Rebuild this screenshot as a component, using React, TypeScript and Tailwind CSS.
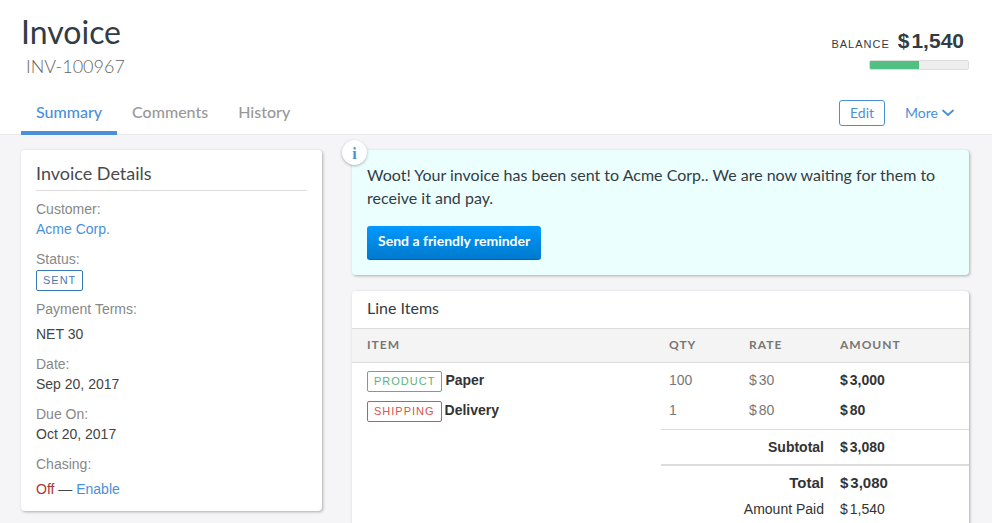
import type { ReactNode } from "react";

function Money({ value }: { value: string }) {
  return (
    <span>
      <span className="mr-0.5">$</span>
      {value}
    </span>
  );
}

type TagTone = "blue" | "green" | "red";

const tagTones: Record<TagTone, string> = {
  blue: "border-[#337ab7] text-[#4a78b5]",
  green: "border-[#5cb85c] text-[#5cb377]",
  red: "border-[#d9534f] text-[#d9534f]",
};

function Tag({ tone, children }: { tone: TagTone; children: ReactNode }) {
  return (
    <span
      className={`mt-px inline-block rounded-xs border px-1.5 text-[11px] leading-[19px] tracking-[1px] uppercase ${tagTones[tone]}`}
    >
      {children}
    </span>
  );
}

function Tab({ label, active = false }: { label: string; active?: boolean }) {
  return (
    <a
      href="#"
      aria-current={active ? "page" : undefined}
      className={`border-b-4 px-[15px] pt-[9px] pb-[7px] font-[Lato] text-base leading-6 font-medium ${
        active ? "border-[#4a90d9] text-[#4a90d9]" : "border-transparent text-[#999]"
      }`}
    >
      {label}
    </a>
  );
}

function Header() {
  return (
    <header className="border-b border-[#e8e9eb] bg-white pr-[23px] pl-[21px]">
      <div className="flex h-[91px] justify-between pt-3">
        <div className="font-[Lato]">
          <h1 className="text-[32px] leading-10 text-[#333c44]">Invoice</h1>
          <p className="pl-[5px] text-lg leading-7 font-light text-[#666]">INV-100967</p>
        </div>
        <div className="flex flex-col items-end pt-[15px]">
          <p className="flex items-baseline gap-2 pr-[5px] leading-7 text-[#333c44]">
            <span className="text-[11px] tracking-[1px]">BALANCE</span>
            <span className="text-[21px] font-bold">
              <Money value="1,540" />
            </span>
          </p>
          <div
            role="progressbar"
            aria-label="Paid"
            aria-valuenow={50}
            className="mt-0.5 h-2.5 w-[100px] overflow-hidden rounded-xs border border-[#ddd] bg-[#eee]"
          >
            <div className="h-full w-1/2 bg-[#52bf83]" />
          </div>
        </div>
      </div>
      <div className="flex items-start justify-between">
        <nav className="-mb-px flex">
          <Tab label="Summary" active />
          <Tab label="Comments" />
          <Tab label="History" />
        </nav>
        <div className="flex items-center gap-5 pt-[9px] pr-[15px] font-[Lato] text-sm text-[#4a90d9]">
          <button type="button" className="h-[26px] rounded-[3px] border border-[#4a90d9] px-2.5 leading-6">
            Edit
          </button>
          <button type="button" className="flex items-center gap-1 leading-6">
            More
            <svg viewBox="0 0 12 8" className="h-2 w-3" fill="none" stroke="currentColor" strokeWidth="1.8">
              <path d="M1 1.5 L6 6 L11 1.5" strokeLinecap="round" strokeLinejoin="round" />
            </svg>
          </button>
        </div>
      </div>
    </header>
  );
}

function Detail({ label, spaced = false, children }: { label: string; spaced?: boolean; children: ReactNode }) {
  return (
    <div>
      <dt className="text-[#888]">{label}:</dt>
      <dd className={spaced ? "pt-[5px]" : ""}>{children}</dd>
    </div>
  );
}

function InvoiceDetails() {
  return (
    <section className="w-[301px] shrink-0 rounded bg-white px-[15px] pt-[9px] pb-3 shadow-[1px_1px_3px_rgba(0,0,0,0.3)]">
      <h2 className="border-b border-[#ddd] pb-[3px] font-[Lato] text-lg leading-7 text-[#4a4a4a]">Invoice Details</h2>
      <dl className="flex flex-col gap-2.5 pt-2 text-sm leading-5 text-[#444]">
        <Detail label="Customer">
          <a href="#" className="text-[#4a90d9]">
            Acme Corp.
          </a>
        </Detail>
        <Detail label="Status">
          <div className="flex h-5 items-start">
            <Tag tone="blue">Sent</Tag>
          </div>
        </Detail>
        <Detail label="Payment Terms" spaced>
          NET 30
        </Detail>
        <Detail label="Date">Sep 20, 2017</Detail>
        <Detail label="Due On">Oct 20, 2017</Detail>
        <Detail label="Chasing" spaced>
          <span className="text-[#a93636]">Off</span> —{" "}
          <a href="#" className="text-[#4a90d9]">
            Enable
          </a>
        </Detail>
      </dl>
    </section>
  );
}

function Notice() {
  return (
    <section className="relative rounded bg-[#ebffff] px-[15px] pt-[13px] pb-[15px] shadow-[1px_1px_3px_rgba(0,0,0,0.3)]">
      <span className="absolute -top-2.5 -left-2.5 flex size-[25px] items-center justify-center rounded-full bg-white pt-0.5 font-['Liberation_Serif'] text-base font-bold text-[#4a90d9] shadow-[0_1px_3px_rgba(0,0,0,0.3)]">
        i
      </span>
      <p className="font-[Lato] text-base leading-[23px] text-[#333c44]">
        Woot! Your invoice has been sent to Acme Corp.. We are now waiting for them to receive it and pay.
      </p>
      <button
        type="button"
        className="mt-[17px] block h-[34px] rounded-[3px] border-b border-[#0069b3] bg-linear-to-b from-[#0099ff] to-[#007acc] px-[11px] pb-1 font-[Lato] text-sm font-bold text-white"
      >
        Send a friendly reminder
      </button>
    </section>
  );
}

const items: { tag: string; tone: TagTone; name: string; qty: string; rate: string; amount: string }[] = [
  { tag: "Product", tone: "green", name: "Paper", qty: "100", rate: "30", amount: "3,000" },
  { tag: "Shipping", tone: "red", name: "Delivery", qty: "1", rate: "80", amount: "80" },
];

function LineItems() {
  return (
    <section className="rounded bg-white pb-5 shadow-[1px_1px_3px_rgba(0,0,0,0.3)]">
      <h2 className="px-[15px] pt-[5px] pb-2 font-[Lato] text-base leading-6 text-[#333c44]">Line Items</h2>
      <table className="w-full table-fixed border-separate border-spacing-0 text-left text-sm leading-5 text-[#333]">
        <thead className="font-[Lato] text-xs tracking-[1px] text-[#777]">
          <tr className="[&>th]:h-[35px] [&>th]:border-y [&>th]:border-[#ddd] [&>th]:bg-[#f4f4f4] [&>th]:pb-px">
            <th className="pl-[15px]">ITEM</th>
            <th className="w-20 pl-2">QTY</th>
            <th className="w-[91px] pl-2">RATE</th>
            <th className="w-[137px] pl-2">AMOUNT</th>
          </tr>
        </thead>
        <tbody>
          {items.map((item) => (
            <tr key={item.name} className="[&>td]:h-[30px] [&>td]:pt-[7px] [&>td]:align-top">
              <td className="pl-[15px]">
                <div className="flex items-start gap-[3px]">
                  <Tag tone={item.tone}>{item.tag}</Tag>
                  <b>{item.name}</b>
                </div>
              </td>
              <td className="pl-2 text-[#777]">{item.qty}</td>
              <td className="pl-2 text-[#777]">
                <Money value={item.rate} />
              </td>
              <td className="pl-2 font-bold">
                <Money value={item.amount} />
              </td>
            </tr>
          ))}
          <tr aria-hidden="true">
            <td colSpan={4} className="h-1.5" />
          </tr>
        </tbody>
        <tfoot>
          <tr className="font-bold">
            <td />
            <th colSpan={2} className="h-[35px] border-t border-[#ddd] pr-2 text-right">
              Subtotal
            </th>
            <td className="border-t border-[#ddd] pl-2">
              <Money value="3,080" />
            </td>
          </tr>
          <tr className="text-[15px] font-bold">
            <td />
            <th colSpan={2} className="h-8 border-t-2 border-[#ddd] pt-1 pr-2 text-right">
              Total
            </th>
            <td className="border-t-2 border-[#ddd] pt-1 pl-2">
              <Money value="3,080" />
            </td>
          </tr>
          <tr>
            <td />
            <th colSpan={2} className="h-[26px] pr-2 text-right font-normal">
              Amount Paid
            </th>
            <td className="pl-2">
              <Money value="1,540" />
            </td>
          </tr>
        </tfoot>
      </table>
    </section>
  );
}

export default function App() {
  return (
    <div className="h-screen overflow-hidden bg-[#f5f5f7] font-['Liberation_Sans',Arial,sans-serif]">
      <Header />
      <main className="flex items-start gap-[30px] pt-[15px] pr-[23px] pb-4 pl-[21px]">
        <InvoiceDetails />
        <div className="flex min-w-0 flex-1 flex-col gap-4">
          <Notice />
          <LineItems />
        </div>
      </main>
    </div>
  );
}
